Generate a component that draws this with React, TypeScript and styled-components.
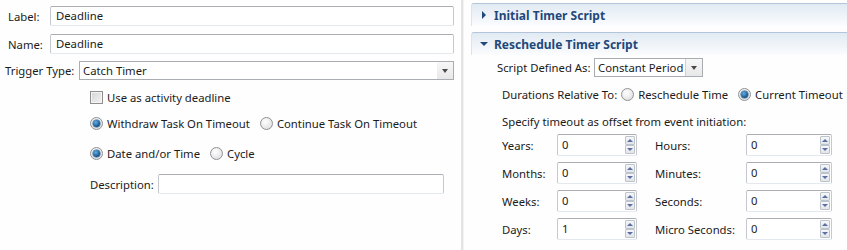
import { Fragment } from 'react'
import styled, { createGlobalStyle } from 'styled-components'

const Global = createGlobalStyle`
    body {
        margin: 0;
        background: #ffffff;
        color: #1b1b1b;
        font-family: 'Noto Sans', 'Open Sans', sans-serif;
        font-size: 11.3px;
    }
`

const Page = styled.div`
    display: flex;
    width: 847px;
    height: 250px;
    overflow: hidden;
    background: #fefefe;
`

const LeftPane = styled.div`
    width: 461px;
    flex-shrink: 0;
    box-sizing: border-box;
    padding: 6px 7px 0 0;
    display: flex;
    flex-direction: column;
`

const Separator = styled.div`
    width: 2px;
    flex-shrink: 0;
    background: #e4e4e4;
    border-right: 1px solid #f2f2f2;
`

const RightPane = styled.div`
    flex: 1;
    min-width: 0;
    padding: 3px 0 0 7px;
    display: flex;
    flex-direction: column;
`

const FieldRow = styled.div<{ $indent: number; $labelWidth: number; $gap?: number }>`
    display: flex;
    align-items: center;
    padding-left: ${(p) => p.$indent}px;
    margin-bottom: ${(p) => p.$gap ?? 7}px;

    > label {
        width: ${(p) => p.$labelWidth}px;
        flex-shrink: 0;
        white-space: nowrap;
    }
`

const TextBox = styled.div<{ $width?: number }>`
    flex: ${(p) => (p.$width ? 'none' : '1')};
    width: ${(p) => (p.$width ? `${p.$width}px` : 'auto')};
    height: 20px;
    box-sizing: border-box;
    border: 1px solid #c5c9cf;
    border-top-color: #abadb3;
    border-bottom-color: #e3e9ef;
    border-radius: 2px;
    background: #fff;
    padding-left: 5px;
    line-height: 18px;
    white-space: nowrap;
`

const Combo = styled.div<{ $width?: number }>`
    flex: ${(p) => (p.$width ? 'none' : '1')};
    width: ${(p) => (p.$width ? `${p.$width}px` : 'auto')};
    height: 19px;
    box-sizing: border-box;
    display: flex;
    border: 1px solid #a9acb0;
    background: #fff;
    line-height: 17px;

    span {
        flex: 1;
        padding-left: 3px;
        white-space: nowrap;
    }
`

const ComboButton = styled.div<{ $split?: boolean }>`
    width: 16px;
    display: flex;
    align-items: center;
    justify-content: center;
    border-left: ${(p) => (p.$split ? '1px solid #d0d0d0' : 'none')};
    background: linear-gradient(#f7f7f7, #e8e8e8);

    &::after {
        content: '';
        border-left: 3.5px solid transparent;
        border-right: 3.5px solid transparent;
        border-top: 4px solid #4a4a4a;
    }
`

const Options = styled.div`
    padding-left: 90px;
    margin-top: 2px;
    display: flex;
    flex-direction: column;
`

const OptionRow = styled.div<{ $gap: number }>`
    display: flex;
    align-items: center;
    height: 16px;
    margin-bottom: ${(p) => p.$gap}px;
`

const Choice = styled.label<{ $lead?: number }>`
    display: flex;
    align-items: center;
    gap: 4px;
    margin-left: ${(p) => p.$lead ?? 0}px;
    margin-right: 10px;
    white-space: nowrap;
`

const CheckBox = styled.span`
    width: 13px;
    height: 13px;
    box-sizing: border-box;
    border: 1px solid #8f8f8f;
    background: linear-gradient(135deg, #d4d4d4, #f4f4f4);
    box-shadow: inset 0 0 0 1px #f4f4f4;
`

const Radio = styled.span<{ $checked?: boolean }>`
    position: relative;
    width: 13px;
    height: 13px;
    box-sizing: border-box;
    border-radius: 50%;
    border: 1px solid #8e9194;
    background: radial-gradient(circle at 40% 35%, #ffffff, #d9d9d9);

    &::after {
        content: '';
        display: ${(p) => (p.$checked ? 'block' : 'none')};
        position: absolute;
        left: 2px;
        top: 2px;
        width: 7px;
        height: 7px;
        border-radius: 50%;
        background: radial-gradient(circle at 40% 35%, #5fb0e8, #134f85 70%);
        box-shadow: 0 0 0 0.5px #2c5d8a;
    }
`

const Section = styled.div<{ $top: number }>`
    margin-top: ${(p) => p.$top}px;
    height: 23px;
    box-sizing: border-box;
    display: flex;
    align-items: center;
    gap: 5px;
    padding-left: 8px;
    border-top: 1px solid #b3c6d9;
    border-left: 1px solid #dbe4ee;
    border-top-left-radius: 3px;
    background: linear-gradient(#e1eaf3, #fbfcfe);
    color: #22487a;
    font-weight: bold;
    font-size: 12px;
`

const Twisty = styled.span<{ $open?: boolean }>`
    width: 0;
    height: 0;
    ${(p) =>
        p.$open
            ? `border-left: 4px solid transparent;
               border-right: 4px solid transparent;
               border-top: 4px solid #22487a;
               margin-right: 1px;`
            : `border-top: 4px solid transparent;
               border-bottom: 4px solid transparent;
               border-left: 4px solid #22487a;
               margin: 0 3px 0 2px;`}
`

const Body = styled.div`
    display: flex;
    flex-direction: column;
    padding-left: 26px;
    padding-top: 3px;
`

const TextLine = styled.div<{ $gap: number }>`
    display: flex;
    align-items: center;
    padding-left: 5px;
    height: 17px;
    margin-top: ${(p) => p.$gap}px;
    white-space: nowrap;
`

const Grid = styled.div`
    display: grid;
    grid-template-columns: 55px 98px 91px 86px;
    grid-auto-rows: 22px;
    row-gap: 6px;
    align-items: center;
    padding-left: 5px;
    margin-top: 4px;
`

const SpinBox = styled.div<{ $width: number }>`
    width: ${(p) => p.$width}px;
    height: 22px;
    box-sizing: border-box;
    display: flex;
    border: 1px solid #c5c9cf;
    border-top-color: #abadb3;
    border-bottom-color: #e3e9ef;
    border-radius: 2px;
    background: #fff;

    span {
        flex: 1;
        padding-left: 4px;
        line-height: 20px;
    }
`

const SpinButtons = styled.div`
    display: flex;
    flex-direction: column;
    width: 10px;
    margin: 1px 1px 1px 0;
`

const SpinArrow = styled.div<{ $up?: boolean }>`
    flex: 1;
    display: flex;
    align-items: center;
    justify-content: center;
    border: 1px solid #bcc3ca;
    border-radius: 1px;
    background: linear-gradient(#f6f7f9, #e1e5ea);

    &::after {
        content: '';
        border-left: 3px solid transparent;
        border-right: 3px solid transparent;
        ${(p) => (p.$up ? 'border-bottom: 3px solid #5b6fa0;' : 'border-top: 3px solid #5b6fa0;')}
    }
`

function Spinner({ value, width }: { value: string; width: number }) {
    return (
        <SpinBox $width={width}>
            <span>{value}</span>
            <SpinButtons>
                <SpinArrow $up />
                <SpinArrow />
            </SpinButtons>
        </SpinBox>
    )
}

const durations: [string, string, string, string][] = [
    ['Years:', '0', 'Hours:', '0'],
    ['Months:', '0', 'Minutes:', '0'],
    ['Weeks:', '0', 'Seconds:', '0'],
    ['Days:', '1', 'Micro Seconds:', '0'],
]

export default function App() {
    return (
        <Page>
            <Global />
            <LeftPane>
                <FieldRow $indent={8} $labelWidth={42} $gap={8}>
                    <label>Label:</label>
                    <TextBox>Deadline</TextBox>
                </FieldRow>
                <FieldRow $indent={8} $labelWidth={42}>
                    <label>Name:</label>
                    <TextBox>Deadline</TextBox>
                </FieldRow>
                <FieldRow $indent={5} $labelWidth={74}>
                    <label>Trigger Type:</label>
                    <Combo>
                        <span>Catch Timer</span>
                        <ComboButton />
                    </Combo>
                </FieldRow>
                <Options>
                    <OptionRow $gap={10}>
                        <Choice>
                            <CheckBox />
                            Use as activity deadline
                        </Choice>
                    </OptionRow>
                    <OptionRow $gap={14}>
                        <Choice>
                            <Radio $checked />
                            Withdraw Task On Timeout
                        </Choice>
                        <Choice>
                            <Radio />
                            Continue Task On Timeout
                        </Choice>
                    </OptionRow>
                    <OptionRow $gap={13}>
                        <Choice>
                            <Radio $checked />
                            Date and/or Time
                        </Choice>
                        <Choice>
                            <Radio />
                            Cycle
                        </Choice>
                    </OptionRow>
                    <FieldRow $indent={0} $labelWidth={68}>
                        <label>Description:</label>
                        <TextBox $width={286} />
                    </FieldRow>
                </Options>
            </LeftPane>
            <Separator />
            <RightPane>
                <Section $top={0}>
                    <Twisty />
                    Initial Timer Script
                </Section>
                <Section $top={6}>
                    <Twisty $open />
                    Reschedule Timer Script
                </Section>
                <Body>
                    <FieldRow $indent={0} $labelWidth={97} $gap={0}>
                        <label>Script Defined As:</label>
                        <Combo $width={109}>
                            <span>Constant Period</span>
                            <ComboButton $split />
                        </Combo>
                    </FieldRow>
                    <TextLine $gap={9}>
                        Durations Relative To:
                        <Choice $lead={4}>
                            <Radio />
                            Reschedule Time
                        </Choice>
                        <Choice>
                            <Radio $checked />
                            Current Timeout
                        </Choice>
                    </TextLine>
                    <TextLine $gap={10}>Specify timeout as offset from event initiation:</TextLine>
                    <Grid>
                        {durations.map(([l1, v1, l2, v2]) => (
                            <Fragment key={l1}>
                                <label>{l1}</label>
                                <Spinner value={v1} width={80} />
                                <label>{l2}</label>
                                <Spinner value={v2} width={86} />
                            </Fragment>
                        ))}
                    </Grid>
                </Body>
            </RightPane>
        </Page>
    )
}
